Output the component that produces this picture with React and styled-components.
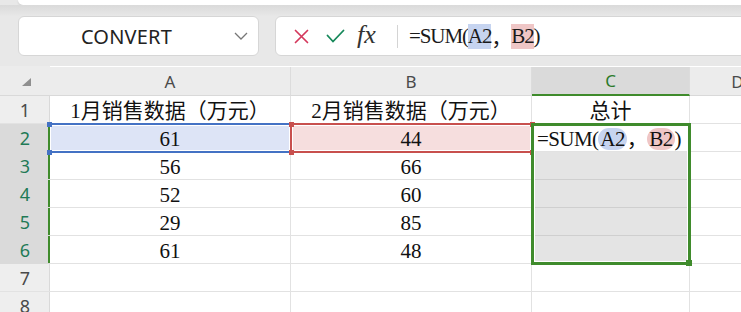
import React from 'react'
import styled, { createGlobalStyle } from 'styled-components'

const GlobalStyle = createGlobalStyle`
  html, body {
    margin: 0;
    padding: 0;
    background: #e8e8e8;
    overflow: hidden;
  }
  * { box-sizing: border-box; }
`

const Page = styled.div`
  width: 741px;
  height: 312px;
  overflow: hidden;
  background: #e8e8e8;
  font-family: "Noto Sans", "Open Sans", sans-serif;
`

const Ribbon = styled.div`
  height: 5px;
  margin-left: 18px;
  background: #fff;
  border-bottom-left-radius: 7px;
  box-shadow: 0 1px 2px rgba(0, 0, 0, 0.12);
`

const Toolbar = styled.div`
  display: flex;
  gap: 16px;
  padding: 11px 0 0 18px;
  height: 51px;
  background: linear-gradient(#dadada 0, #e6e6e6 10px, #e8e8e8 11px);
`

const NameBox = styled.div`
  width: 241px;
  height: 40px;
  background: #fff;
  border: 1px solid #d6d6d6;
  border-radius: 6px;
  display: flex;
  align-items: center;
  padding: 0 10px 0 0;
`

const NameText = styled.div`
  flex: 1;
  text-align: center;
  font-size: 20px;
  color: #222;
  letter-spacing: 0.2px;
`

const FormulaBar = styled.div`
  flex: 1;
  height: 40px;
  margin-right: -10px;
  background: #fff;
  border: 1px solid #d6d6d6;
  border-radius: 6px;
  display: flex;
  align-items: center;
  padding-left: 17px;
`

const IconSlot = styled.div`
  width: ${p => p.$w}px;
  margin-right: ${p => p.$gap}px;
  display: flex;
  align-items: center;
  justify-content: center;
`

const Fx = styled.span`
  font-family: "Liberation Serif", serif;
  font-style: italic;
  font-size: 26px;
  color: #333;
  width: 25px;
  margin-right: 15px;
  line-height: 1;
  padding-bottom: 3px;
`

const Divider = styled.div`
  width: 1px;
  height: 23px;
  background: #d4d4d4;
  margin-right: 11px;
`

const FormulaText = styled.div`
  font-family: "Liberation Serif", "Noto Sans CJK SC", serif;
  font-size: 21px;
  color: #1a1a1a;
  display: flex;
  align-items: center;
  white-space: pre;
  letter-spacing: -1.1px;
`

const Ref = styled.span`
  display: inline-block;
  background: ${p => (p.$tone === 'blue' ? '#c6d4f0' : '#efc6c6')};
  border-radius: ${p => (p.$pill ? '11px' : '0')};
  line-height: ${p => (p.$pill ? '22px' : '25px')};
  padding: 0 ${p => (p.$pill ? '2px' : '0')};
`

const Sheet = styled.div`
  margin-top: 10px;
  width: 786px;
  display: grid;
  grid-template-columns: 50px 241px 241px 158px 96px;
  grid-template-rows: 30px repeat(8, 28px);
  background: #fff;
`

const Corner = styled.div`
  grid-column: 1;
  grid-row: 1;
  background: #ececec;
  border-bottom: 1px solid #d9d9d9;
  display: flex;
  align-items: flex-end;
  padding: 0 0 9px 22px;
`

const ColHead = styled.div`
  grid-column: ${p => p.$c};
  grid-row: 1;
  margin-top: 1px;
  background: ${p => (p.$active ? '#dadada' : '#ececec')};
  color: ${p => (p.$active ? '#2b7a2b' : '#4a4a4a')};
  border-right: 1px solid #dcdcdc;
  border-bottom: ${p => (p.$active ? '2px solid #3f8b2c' : '1px solid #d9d9d9')};
  display: flex;
  align-items: center;
  justify-content: center;
  font-size: 17px;
`

const RowHead = styled.div`
  grid-column: 1;
  grid-row: ${p => p.$r + 1};
  background: ${p => (p.$active ? '#dadada' : '#eeeeee')};
  color: ${p => (p.$active ? '#1f7a56' : '#4a4a4a')};
  border-bottom: 1px solid ${p => (p.$active ? '#dadada' : '#e2e2e2')};
  box-shadow: ${p => (p.$active ? 'inset -2px 0 0 #3f8b2c' : 'inset -1px 0 0 #d9d9d9')};
  display: flex;
  align-items: center;
  justify-content: center;
  font-size: 18px;
  padding-top: 1px;
`

const Cell = styled.div`
  grid-column: ${p => p.$c};
  grid-row: ${p => p.$r + 1};
  background: ${p => p.$fill || '#fff'};
  border-right: 1px solid ${p => (p.$fill === '#e4e4e4' ? '#d2d2d2' : '#e2e2e2')};
  border-bottom: 1px solid ${p => (p.$fill === '#e4e4e4' ? '#cfcfcf' : '#e2e2e2')};
  font-family: "Liberation Serif", "Noto Sans CJK SC", serif;
  font-size: 21px;
  color: #111;
  line-height: 27px;
  padding-top: 2px;
  text-align: ${p => (p.$left ? 'left' : 'center')};
  padding-left: ${p => (p.$left ? '5px' : '0')};
  letter-spacing: ${p => (p.$left ? '-0.6px' : '0')};
  white-space: nowrap;
  overflow: visible;
`

const Selection = styled.div`
  grid-column: ${p => p.$c};
  grid-row: ${p => p.$r + 1} / span ${p => p.$span || 1};
  margin: -1px -1px -1px ${p => (p.$noLeft ? '0' : '-1px')};
  position: relative;
  z-index: ${p => p.$z || 2};
  pointer-events: none;
  border: ${p => p.$w || 2}px solid ${p => p.$color};
  border-left-width: ${p => (p.$noLeft ? 0 : p.$w || 2)}px;
  box-shadow: inset 0 0 0 1px #fff;
`

const Handle = styled.div`
  position: absolute;
  width: ${p => p.$size || 5}px;
  height: ${p => p.$size || 5}px;
  background: ${p => p.$color};
  ${p => (p.$top ? 'top' : 'bottom')}: ${p => -((p.$size || 5) / 2 + 1)}px;
  ${p => (p.$left ? 'left' : 'right')}: ${p => -((p.$size || 5) / 2 + 1)}px;
`

const Triangle = () => (
  <svg width="9" height="8" viewBox="0 0 9 8">
    <polygon points="9,0 9,8 0,8" fill="#8f8f8f" />
  </svg>
)

const Chevron = () => (
  <svg width="14" height="8" viewBox="0 0 14 8">
    <polyline points="1,1 7,7 13,1" fill="none" stroke="#777" strokeWidth="1.3" />
  </svg>
)

const Cross = () => (
  <svg width="15" height="15" viewBox="0 0 15 15">
    <path d="M1.5 1.5 L13.5 13.5 M13.5 1.5 L1.5 13.5" stroke="#d4385c" strokeWidth="1.7" strokeLinecap="round" />
  </svg>
)

const Tick = () => (
  <svg width="19" height="14" viewBox="0 0 19 14">
    <polyline points="1.5,6.5 7,12.5 17.5,1.5" fill="none" stroke="#16885a" strokeWidth="1.8" strokeLinecap="round" />
  </svg>
)

const dataA = [61, 56, 52, 29, 61]
const dataB = [44, 66, 60, 85, 48]

export default function App() {
  return (
    <Page>
      <GlobalStyle />
      <Ribbon />
      <Toolbar>
        <NameBox>
          <NameText>CONVERT</NameText>
          <Chevron />
        </NameBox>
        <FormulaBar>
          <IconSlot $w={16} $gap={17}><Cross /></IconSlot>
          <IconSlot $w={19} $gap={12}><Tick /></IconSlot>
          <Fx>fx</Fx>
          <Divider />
          <FormulaText>
            =SUM(<Ref $tone="blue">A2</Ref>，<Ref $tone="red">B2</Ref>)
          </FormulaText>
        </FormulaBar>
      </Toolbar>

      <Sheet>
        <Corner><Triangle /></Corner>
        <ColHead $c={2}>A</ColHead>
        <ColHead $c={3}>B</ColHead>
        <ColHead $c={4} $active>C</ColHead>
        <ColHead $c={5}>D</ColHead>

        {[1, 2, 3, 4, 5, 6, 7, 8].map(r => (
          <RowHead key={r} $r={r} $active={r >= 2 && r <= 6}>{r}</RowHead>
        ))}

        <Cell $r={1} $c={2}>1月销售数据（万元）</Cell>
        <Cell $r={1} $c={3}>2月销售数据（万元）</Cell>
        <Cell $r={1} $c={4}>总计</Cell>
        <Cell $r={1} $c={5} />

        {dataA.map((v, i) => (
          <React.Fragment key={i}>
            <Cell $r={i + 2} $c={2} $fill={i === 0 ? '#dde4f6' : undefined}>{v}</Cell>
            <Cell $r={i + 2} $c={3} $fill={i === 0 ? '#f6dede' : undefined}>{dataB[i]}</Cell>
            {i === 0 ? (
              <Cell $r={2} $c={4} $left>
                =SUM(<Ref $tone="blue" $pill>A2</Ref>，<Ref $tone="red" $pill>B2</Ref>)
              </Cell>
            ) : (
              <Cell $r={i + 2} $c={4} $fill="#e4e4e4" />
            )}
            <Cell $r={i + 2} $c={5} />
          </React.Fragment>
        ))}

        {[7, 8].map(r => (
          <React.Fragment key={r}>
            <Cell $r={r} $c={2} />
            <Cell $r={r} $c={3} />
            <Cell $r={r} $c={4} />
            <Cell $r={r} $c={5} />
          </React.Fragment>
        ))}

        <Selection $c={2} $r={2} $color="#4472c4" $noLeft>
          <Handle $color="#4472c4" $top $left />
          <Handle $color="#4472c4" $left />
        </Selection>
        <Selection $c={3} $r={2} $color="#c8504e" $z={3}>
          <Handle $color="#c8504e" $top $left />
          <Handle $color="#c8504e" $left />
          <Handle $color="#c8504e" $top />
          <Handle $color="#c8504e" />
        </Selection>
        <Selection $c={4} $r={2} $span={5} $color="#3f8b2c" $w={3} $z={4}>
          <Handle $color="#3f8b2c" $size={6} />
        </Selection>
      </Sheet>
    </Page>
  )
}
